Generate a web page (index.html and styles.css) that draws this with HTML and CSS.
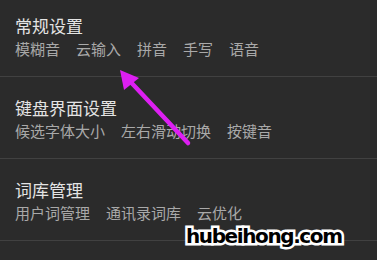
FILE: index.html
```html
<!DOCTYPE html>
<html lang="zh">
<head>
<meta charset="utf-8">
<link rel="stylesheet" href="styles.css">
</head>
<body>
<div class="screen">
  <section class="group first">
    <div class="title">常规设置</div>
    <div class="opts"><span>模糊音</span><span>云输入</span><span>拼音</span><span>手写</span><span>语音</span></div>
  </section>
  <section class="group">
    <div class="title">键盘界面设置</div>
    <div class="opts"><span>候选字体大小</span><span>左右滑动切换</span><span>按键音</span></div>
  </section>
  <section class="group">
    <div class="title">词库管理</div>
    <div class="opts"><span>用户词管理</span><span>通讯录词库</span><span>云优化</span></div>
  </section>
  <svg class="arrow" width="377" height="260" viewBox="0 0 377 260">
    <line x1="188" y1="143" x2="126" y2="77" stroke="#dd1ff2" stroke-width="4.5" stroke-linecap="round"/>
    <polygon points="120,70 139,78 124,90" fill="#dd1ff2"/>
  </svg>
  <div class="mark">hubeihong.com</div>
</div>
</body>
</html>
```
FILE: styles.css
```css
html, body {
  margin: 0;
  padding: 0;
  background: #2b2b2b;
}
.screen {
  position: relative;
  width: 377px;
  height: 260px;
  overflow: hidden;
  background: #2b2b2b;
  font-family: "Noto Sans CJK SC", "Noto Sans", sans-serif;
}
.group {
  display: flex;
  flex-direction: column;
  gap: 2px;
  padding: 20px 15px 17px;
  border-bottom: 1px solid #414141;
}
.group.first {
  padding-top: 15px;
}
.title {
  font-size: 17px;
  line-height: 22px;
  color: #e4e4e4;
}
.opts {
  display: flex;
  gap: 16px;
  font-size: 15px;
  line-height: 20px;
  color: #a9a9a9;
}
.arrow {
  position: absolute;
  left: 0;
  top: 0;
}
.mark {
  position: absolute;
  left: 186px;
  top: 222px;
  font-family: "DejaVu Sans", sans-serif;
  font-weight: bold;
  font-size: 20px;
  line-height: 28px;
  letter-spacing: -1.4px;
  color: #000;
  -webkit-text-stroke: 5px #fff;
  paint-order: stroke fill;
}
```
